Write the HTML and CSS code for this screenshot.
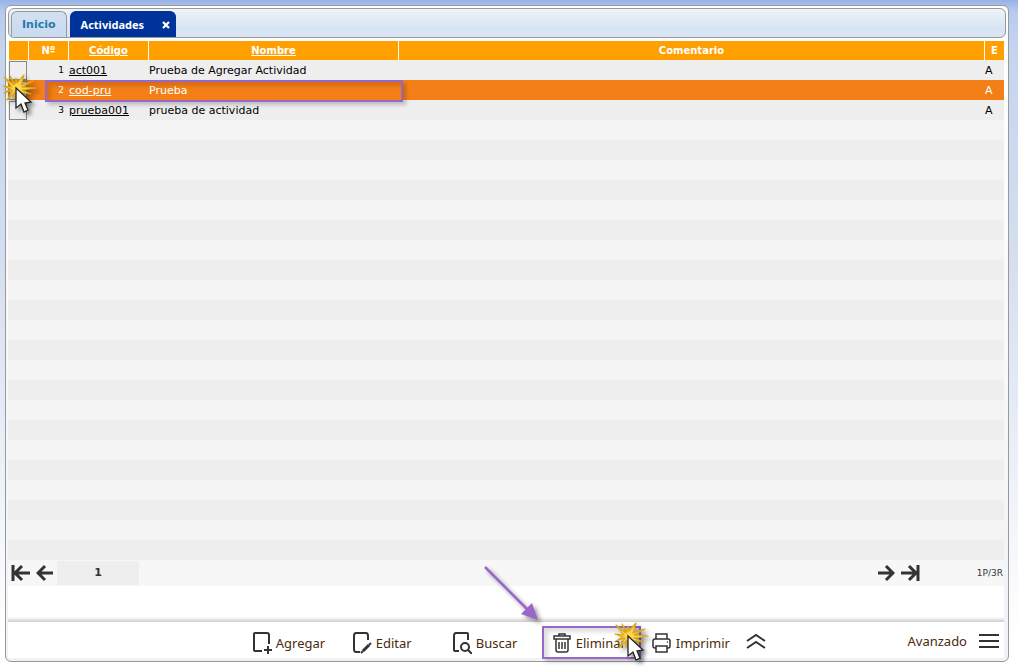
FILE: index.html
```html
<!DOCTYPE html>
<html lang="es">
<head>
<meta charset="utf-8">
<title>Actividades</title>
<link rel="stylesheet" href="styles.css">
</head>
<body>
<svg width="0" height="0" class="defs" aria-hidden="true">
  <symbol id="pointer" viewBox="0 0 40 46">
    <path d="M12 12 2 4l8 10-9-1 8 3-7 4 9-3-6 10 8-8-1 7 3-6 6 5-4-6 12 2-9-4 14-2-14-1 11-6-12 4 3-10-7 8-1-5-1 6-5-8z" fill="#ffd54f" stroke="#dda70f" stroke-width="1.2" stroke-linejoin="round"/>
    <path d="M14 15v20l5-4 3 8 4-2-3-7 6-1z" fill="#fff" stroke="#222" stroke-width="1.3"/>
  </symbol>
</svg>
<main class="window">
  <nav class="tabs">
    <button class="tab" type="button">Inicio</button>
    <button class="tab tab-active" type="button">Actividades
      <svg class="close" viewBox="0 0 8 8"><path d="M1 1l6 6M7 1L1 7" stroke="#fff" stroke-width="2.2"/></svg>
    </button>
  </nav>
  <section class="grid">
    <table class="list">
      <colgroup><col class="c-check"><col class="c-num"><col class="c-code"><col class="c-name"><col><col class="c-state"></colgroup>
      <thead>
        <tr><th></th><th>Nº</th><th><a href="#">Código</a></th><th><a href="#">Nombre</a></th><th>Comentario</th><th>E</th></tr>
      </thead>
      <tbody>
        <tr><td><input class="check" type="checkbox" aria-label="act001"></td><td class="num">1</td><td><a href="#">act001</a></td><td>Prueba de Agregar Actividad</td><td></td><td>A</td></tr>
        <tr class="selected"><td><input class="check" type="checkbox" aria-label="cod-pru"></td><td class="num">2</td><td><a href="#">cod-pru</a></td><td>Prueba</td><td></td><td>A</td></tr>
        <tr><td><input class="check" type="checkbox" aria-label="prueba001"></td><td class="num">3</td><td><a href="#">prueba001</a></td><td>prueba de actividad</td><td></td><td>A</td></tr>
      </tbody>
    </table>
    <div class="mark mark-row"></div>
    <svg class="pointer pointer-row"><use href="#pointer"/></svg>
  </section>
  <nav class="pager">
    <button type="button" aria-label="Primera"><svg width="20" height="18" viewBox="0 0 20 18"><path d="M2 1v16M19 9H4M11 2 4 9l7 7"/></svg></button>
    <button type="button" aria-label="Anterior"><svg width="18" height="18" viewBox="0 0 18 18"><path d="M17 9H3M9 2 2 9l7 7"/></svg></button>
    <span class="page">1</span>
    <button class="next" type="button" aria-label="Siguiente"><svg width="18" height="18" viewBox="0 0 18 18"><path d="M1 9h14M9 2l7 7-7 7"/></svg></button>
    <button type="button" aria-label="Última"><svg width="20" height="18" viewBox="0 0 20 18"><path d="M18 1v16M1 9h15M9 2l7 7-7 7"/></svg></button>
    <span class="count">1P/3R</span>
  </nav>
  <div class="spacer"></div>
  <footer class="toolbar">
    <div class="actions">
      <button class="action" type="button"><svg width="20" height="22" viewBox="0 0 20 22"><path d="M10 19H3Q2 19 2 18V2Q2 1 3 1H15Q17 1 17 3V12M16 14v8M12 18h8"/></svg>Agregar</button>
      <button class="action" type="button"><svg width="20" height="22" viewBox="0 0 20 22"><path d="M8 20H4Q2 20 2 17V4Q2 1 4 1H14Q16 1 16 4V8"/><path d="M11 19l6-6" stroke-width="3"/><path d="M9 21l2-2M17 13l2-2"/></svg>Editar</button>
      <button class="action" type="button"><svg width="20" height="22" viewBox="0 0 20 22"><path d="M7 19H3Q2 19 2 18V4Q2 1 4 1H15Q16 1 16 2V8"/><circle cx="13" cy="15" r="4"/><path d="M16 18l4 4"/></svg>Buscar</button>
      <button class="action" type="button"><svg class="fine" width="20" height="22" viewBox="0 0 20 22"><path d="M2 4h16v3H2zM7 4V2h6v2M4 7v11q0 2 2 2h8q2 0 2-2V7M7 10v7M10 10v7M13 10v7"/></svg>Eliminar
        <span class="mark mark-action"></span>
        <svg class="arrow" viewBox="0 0 60 60"><path d="M2 2l43 43" stroke="#9966cc" stroke-width="2.5"/><path d="M55 55 38 49l11-11z" fill="#9966cc" stroke="none"/></svg>
        <svg class="pointer pointer-action"><use href="#pointer"/></svg>
      </button>
      <button class="action" type="button"><svg class="fine" width="20" height="22" viewBox="0 0 20 22"><path d="M4 7V2h11v5M4 16H3q-2 0-2-2V9q0-2 2-2h13q2 0 2 2v5q0 2-2 2h-1M4 14h11v6H4zM15 10h1"/></svg>Imprimir</button>
      <button class="more" type="button" aria-label="Subir"><svg width="20" height="16" viewBox="0 0 20 16"><path d="M1 8l9-6 9 6M1 15l9-6 9 6"/></svg></button>
    </div>
    <button class="advanced" type="button">Avanzado<svg width="20" height="16" viewBox="0 0 20 16"><path d="M0 2h20M0 8h20M0 14h20"/></svg></button>
  </footer>
</main>
</body>
</html>
```
FILE: styles.css
```css
* { box-sizing: border-box; }
body {
  margin: 0;
  min-height: 100vh;
  padding: 5px 9px 8px 5px;
  display: flex;
  background: linear-gradient(#96b3e8 0, #b8cbef 12px, #c6d4ee 50px, #d4def0 250px, #fff 640px);
  font-family: "DejaVu Sans", Verdana, sans-serif;
  font-size: 11px;
  color: #000;
}
button { border: 0; padding: 0; margin: 0; background: none; font: inherit; color: inherit; }
svg { fill: none; stroke: #333; stroke-width: 2; }
a { color: inherit; }
.defs { position: absolute; }
.window {
  flex: 1;
  min-width: 0;
  display: flex;
  flex-direction: column;
  border: 1px solid #999;
  border-radius: 6px;
  padding: 2px 4px 3px 2px;
  background: linear-gradient(#fff, #eff3f7);
}
.tabs {
  display: flex;
  align-items: flex-end;
  gap: 3px;
  height: 30px;
  margin-right: -2px;
  padding-left: 2px;
  border: 1px solid #999;
  border-radius: 6px;
  background: linear-gradient(#edf4fb, #d6e3f3 70%, #dbe7f5);
}
.tab {
  height: 26px;
  padding: 0 10px;
  border: 1px solid #999;
  border-bottom: 0;
  border-radius: 6px 6px 0 0;
  background: linear-gradient(#d3e0f2, #c9dbf0);
  font-weight: bold;
  color: #2779aa;
}
.tab-active {
  display: flex;
  align-items: center;
  gap: 18px;
  padding: 0 5px 0 10px;
  border-color: #003399;
  background: #003399;
  font-family: "Noto Sans", Tahoma, sans-serif;
  color: #fff;
}
.close { width: 8px; height: 8px; }
.grid {
  position: relative;
  flex: 1;
  margin-top: 3px;
  background: repeating-linear-gradient(#f4f4f4 0 19px, #eee 19px 39px, #f4f4f4 39px 40px);
}
.list { width: 100%; border-spacing: 0; table-layout: fixed; }
.c-check { width: 21px; }
.c-num { width: 40px; }
.c-code { width: 80px; }
.c-name { width: 250px; }
.c-state { width: 19px; }
th {
  height: 19px;
  padding: 0;
  border-right: 1px solid #fff;
  background: #ffa000;
  color: #fff;
  font-size: 10px;
}
th:first-child { border-left: 1px solid #fff; }
th:last-child { border-right: 0; }
td { height: 20px; padding: 1px 0 0; background: #eee; white-space: nowrap; line-height: 19px; }
td:first-child { padding: 0; }
.num { padding-right: 5px; text-align: right; font-size: 9px; }
.selected td { background: #f57f17; color: #fff; }
.check {
  appearance: none;
  display: block;
  width: 18px;
  height: 19px;
  margin: 0 0 0 1px;
  border: 1px solid #888;
  background: #eee;
}
.mark { position: absolute; border: 2px solid #9966cc; box-shadow: 3px 3px 4px #0003, inset 4px 4px 4px #0002; }
.mark-row { left: 37px; top: 39px; width: 358px; height: 22px; }
.pointer { position: absolute; width: 40px; height: 46px; filter: drop-shadow(3px 3px 2px #0007); }
.pointer-row { left: -6px; top: 32px; }
.pager {
  display: flex;
  align-items: center;
  height: 26px;
  padding-left: 3px;
  background: #f7f7f7;
}
.pager button { margin-right: 5px; }
.pager button + .page { margin-left: -2px; }
.pager svg { display: block; stroke-width: 3; }
.page {
  width: 82px;
  line-height: 24px;
  background: #eee;
  color: #333;
  font-weight: bold;
  text-align: center;
}
.pager .next { margin-left: auto; }
.count { width: 79px; padding-right: 1px; font-size: 9px; text-align: right; color: #333; }
.spacer { height: 36px; background: linear-gradient(#fff 31px, #ccc); }
.spacer, .pager, .toolbar { flex-shrink: 0; }
.toolbar {
  display: flex;
  height: 36px;
  padding-right: 5px;
  background: #fff;
  font-family: "Noto Sans", Tahoma, sans-serif;
  font-size: 13px;
  color: #4b2b0b;
}
.actions { display: flex; flex: 1; padding: 6px 0 0 24.6%; }
.action { position: relative; display: flex; align-items: center; gap: 4px; width: 100px; }
.fine { stroke-width: 1.5; }
.mark-action { left: -10px; top: -2px; width: 99px; height: 33px; }
.arrow { position: absolute; left: -69px; top: -63px; width: 60px; height: 60px; filter: drop-shadow(3px 3px 2px #0006); }
.pointer-action { left: 62px; top: -7px; }
.more { width: 20px; margin-left: -6px; }
.advanced { display: flex; align-items: center; gap: 12px; padding-top: 2px; }
```
